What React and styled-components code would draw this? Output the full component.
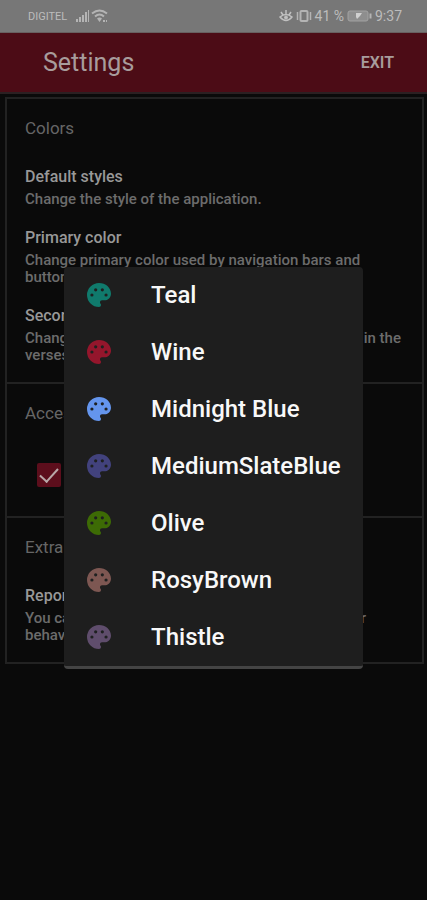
import React from "react";
import styled, { createGlobalStyle } from "styled-components";

const colors = [
  { name: "Teal", value: "#107a6c" },
  { name: "Wine", value: "#94162c" },
  { name: "Midnight Blue", value: "#6495ed" },
  { name: "MediumSlateBlue", value: "#42427d" },
  { name: "Olive", value: "#3d6b05" },
  { name: "RosyBrown", value: "#7d5752" },
  { name: "Thistle", value: "#5f4d6c" },
];

const StatusIcons = () => (
  <svg width="33" height="14" viewBox="0 0 33 14" fill="#b4b4b4" aria-hidden="true">
    <path d="M1 10h2v3H1zM4 8h2v5H4zM7 6h2v7H7zM10 3h2v10h-2zM13 1h1v12h-1z" />
    <g fill="none" stroke="#b4b4b4" strokeWidth="2">
      <path d="M17 4.500q7.500-6 15 0M20 7.500q4.500-4 9 0" />
    </g>
    <path d="M22 9.500q2.500-2 5 0L24.500 13zM28 11h2v2h-2zM31 11h1v2h-1z" />
  </svg>
);

const EyeIcon = () => (
  <svg width="14" height="12" viewBox="0 0 14 12" fill="none" stroke="#c0c0c0" aria-hidden="true">
    <path d="M1 7q6-5 12 0-6 7-12 0zM2 2l2 3M7 0v4M12 2l-2 3" strokeWidth="1.500" />
    <circle cx="7" cy="7.500" r="1.500" fill="#c0c0c0" />
  </svg>
);

const VibrateIcon = () => (
  <svg width="16" height="12" viewBox="0 0 16 12" fill="none" stroke="#b4b4b4" aria-hidden="true">
    <rect x="4.500" y="1" width="7" height="10" rx="1" strokeWidth="2" />
    <path d="M1.500 2v8M14.500 2v8" strokeWidth="1.500" />
  </svg>
);

const BatteryIcon = () => (
  <svg width="25" height="12" viewBox="0 0 25 12" aria-hidden="true">
    <rect x="1" y="1" width="20" height="10" rx="2" fill="#8e8e8e" stroke="#a2a2a2" />
    <path d="M22.500 3.500h2v5h-2z" fill="#b4b4b4" />
    <path d="M9 3h6l-2 3-3 3-1-2z" fill="#d0d0d0" />
  </svg>
);

const PaletteIcon = ({ color }) => (
  <svg width="24" height="24" viewBox="3 3 18 18" aria-hidden="true">
    <path
      fill={color}
      d="M12 3a9 9 0 0 0 0 18c.83 0 1.500-.67 1.500-1.500 0-.39-.15-.74-.39-1.010-.23-.26-.38-.61-.38-.99 0-.83.67-1.500 1.500-1.500H16c2.760 0 5-2.240 5-5 0-4.420-4.030-8-9-8z"
    />
    <g fill="#1e2020">
      <circle cx="6.700" cy="12" r="1.200" />
      <circle cx="9.500" cy="8.100" r="1.200" />
      <circle cx="14.500" cy="8.100" r="1.200" />
      <circle cx="17.300" cy="12" r="1.200" />
    </g>
  </svg>
);

const App = () => {
  return (
    <Page>
      <GlobalStyle />
      <StatusBar>
        <Carrier>DIGITEL</Carrier>
        <StatusIcons />
        <StatusRight>
          <EyeIcon />
          <VibrateIcon />
          <span>41 %</span>
          <BatteryIcon />
          <span>9:37</span>
        </StatusRight>
      </StatusBar>
      <Header>
        <Title>Settings</Title>
        <ExitButton type="button">EXIT</ExitButton>
      </Header>

      <Card>
        <Section>
          <SectionTitle>Colors</SectionTitle>
          <Setting>
            <SettingName>Default styles</SettingName>
            <SettingText>Change the style of the application.</SettingText>
          </Setting>
          <Setting>
            <SettingName>Primary color</SettingName>
            <SettingText>
              Change primary color used by navigation bars and buttons.
            </SettingText>
          </Setting>
          <Setting>
            <SettingName>Secondary color</SettingName>
            <SettingText>
              Change secondary color used by the chapter titles in the verses.
            </SettingText>
          </Setting>
        </Section>
        <Section>
          <SectionTitle>Accessibility</SectionTitle>
          <CheckLabel>
            <CheckBox type="checkbox" defaultChecked />
            <SettingName as="span">Dark mode</SettingName>
          </CheckLabel>
        </Section>
        <Section>
          <SectionTitle>Extra</SectionTitle>
          <Setting>
            <SettingName>Report a problem</SettingName>
            <SettingText>
              You can send us a message about an error or other behavior.
            </SettingText>
          </Setting>
        </Section>
      </Card>

      <Overlay>
        <Dialog role="dialog" aria-label="Primary color">
          {colors.map((color) => (
            <ColorButton type="button" key={color.name}>
              <PaletteIcon color={color.value} />
              {color.name}
            </ColorButton>
          ))}
        </Dialog>
      </Overlay>
    </Page>
  );
};

export default App;

const GlobalStyle = createGlobalStyle`
  * {
    box-sizing: border-box;
  }
  body {
    margin: 0;
    background: #0a0a0a;
    font-family: Roboto, "Liberation Sans", sans-serif;
  }
  h1, h2, h3, p {
    margin: 0;
  }
  button {
    font-family: inherit;
    border: none;
    background: none;
    cursor: pointer;
  }
`;
const Page = styled.div`
  min-height: 100vh;
`;
const StatusBar = styled.div`
  height: 33px;
  padding: 0 25px 0 28px;
  display: flex;
  align-items: center;
  background: #777777;
  border-bottom: 1px solid #686060;
  color: #bcbcbc;
`;
const Carrier = styled.span`
  font-size: 11px;
  margin-right: 8px;
`;
const StatusRight = styled.div`
  display: flex;
  align-items: center;
  gap: 3px;
  margin-left: auto;
  font-size: 14px;
`;
const Header = styled.header`
  height: 61px;
  padding: 0 33px 0 43px;
  display: flex;
  align-items: center;
  justify-content: space-between;
  background: #4c0c16;
  border-bottom: 2px solid #2b2022;
`;
const Title = styled.h1`
  font-size: 25px;
  font-weight: 400;
  color: #a89c9c;
`;
const ExitButton = styled.button`
  padding: 0;
  font-size: 16px;
  font-weight: 600;
  color: #a89c9c;
`;
const Card = styled.main`
  margin: 3px 3px 0 5px;
  border: 2px solid #222222;
`;
const Section = styled.section`
  padding: 18px;

  & + & {
    border-top: 2px solid #222222;
  }
`;
const SectionTitle = styled.h2`
  font-size: 17px;
  line-height: 22px;
  font-weight: 400;
  color: #666666;
  margin-bottom: 28px;
`;
const Setting = styled.div`
  & + & {
    margin-top: 20px;
  }
`;
const SettingName = styled.h3`
  font-size: 16px;
  line-height: 20px;
  font-weight: 500;
  color: #989898;
  margin-bottom: 4px;
`;
const SettingText = styled.p`
  font-size: 15px;
  line-height: 17px;
  font-weight: 500;
  color: #6c6c6c;
`;
const CheckLabel = styled.label`
  display: flex;
  align-items: center;
  gap: 16px;
  height: 46px;
  padding-left: 12px;
`;
const CheckBox = styled.input`
  appearance: none;
  width: 24px;
  height: 24px;
  margin: 0;
  border-radius: 2px;
  background: #5c0e1c;
  display: grid;
  place-items: center;

  &:checked::after {
    content: "";
    width: 8px;
    height: 16px;
    margin-bottom: 4px;
    border: solid #b8a8a8;
    border-width: 0 2px 2px 0;
    transform: rotate(42deg);
  }
`;
const Overlay = styled.div`
  position: fixed;
  inset: 35px 0 0;
  display: flex;
  align-items: center;
  justify-content: center;
`;
const Dialog = styled.div`
  width: 70%;
  background: #1e1e1e;
  border-radius: 4px;
  border-bottom: 3px solid #444444;
`;
const ColorButton = styled.button`
  width: 100%;
  height: 57px;
  padding: 0 0 0 23px;
  display: flex;
  align-items: center;
  gap: 40px;
  font-size: 24px;
  font-weight: 500;
  text-align: left;
  color: #f8f8f8;
`;
